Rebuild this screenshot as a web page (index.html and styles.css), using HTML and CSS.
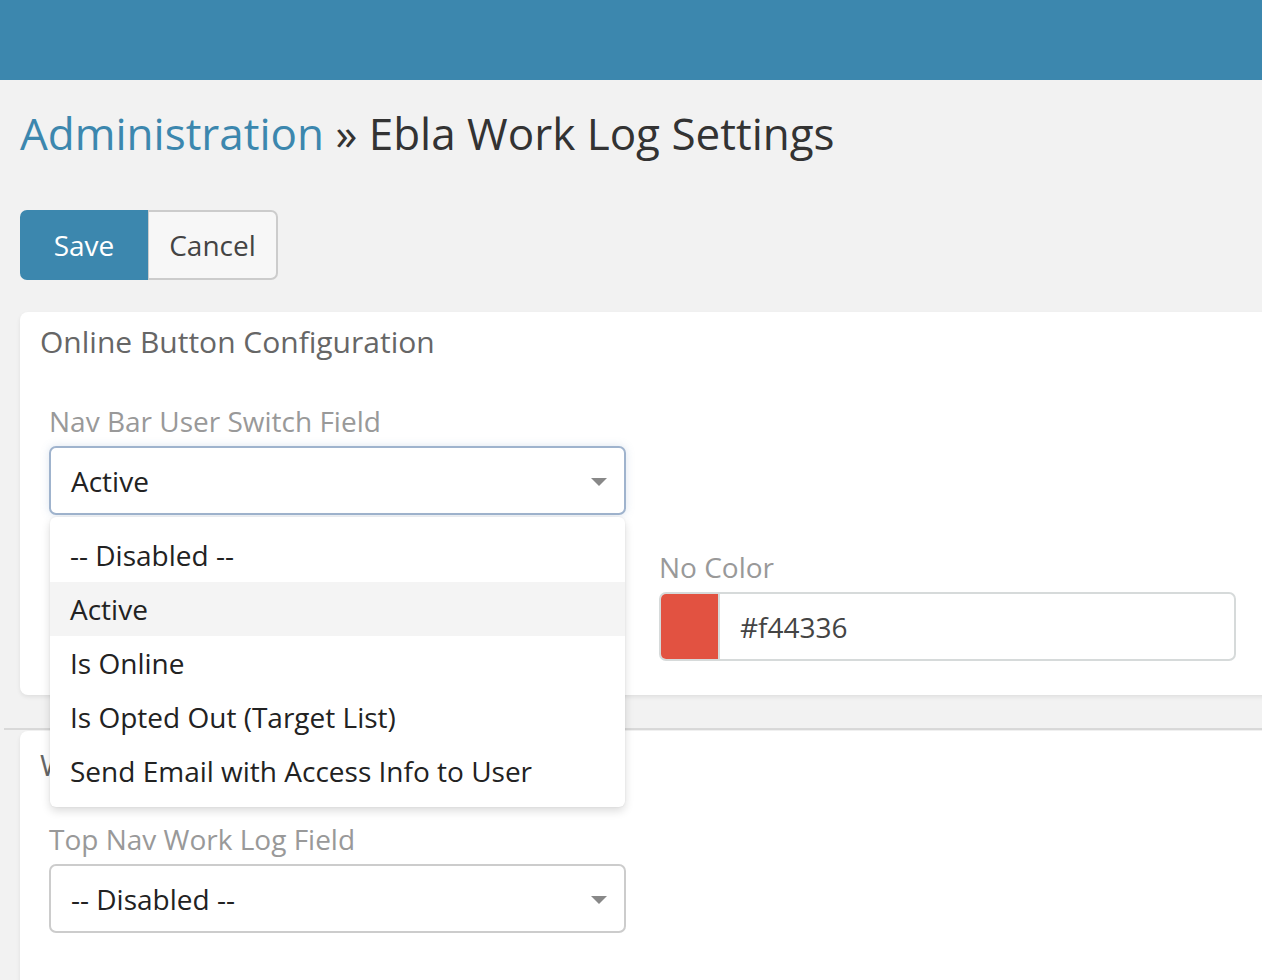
FILE: index.html
```html
<!DOCTYPE html>
<html lang="en">
<head>
<meta charset="utf-8">
<title>Ebla Work Log Settings</title>
<link rel="stylesheet" href="styles.css">
</head>
<body>
<header class="topbar"></header>
<main class="page">
  <h1 class="title"><a class="crumb" href="#">Administration</a> <span class="sep">»</span> Ebla Work Log Settings</h1>
  <div class="actions">
    <button class="btn btn-primary" type="button">Save</button><button class="btn btn-default" type="button">Cancel</button>
  </div>

  <section class="panel panel-first">
    <h2 class="panel-title">Online Button Configuration</h2>
    <div class="grid">
      <div class="field field-select">
        <label class="label">Nav Bar User Switch Field</label>
        <div class="select is-open"><span class="select-value">Active</span><span class="caret"></span></div>
        <ul class="dropdown">
          <li class="option">-- Disabled --</li>
          <li class="option is-hover">Active</li>
          <li class="option">Is Online</li>
          <li class="option">Is Opted Out (Target List)</li>
          <li class="option">Send Email with Access Info to User</li>
        </ul>
      </div>
      <div class="field"></div>
      <div class="field field-empty"></div>
      <div class="field">
        <label class="label">No Color</label>
        <div class="color-input"><span class="swatch"></span><span class="color-text">#f44336</span></div>
      </div>
    </div>
  </section>

  <div class="divider"></div>

  <section class="panel panel-second">
    <h2 class="panel-title">W</h2>
    <div class="grid">
      <div class="field">
        <label class="label">Top Nav Work Log Field</label>
        <div class="select"><span class="select-value">-- Disabled --</span><span class="caret"></span></div>
      </div>
    </div>
  </section>
</main>
</body>
</html>
```

FILE: styles.css
```css
* { box-sizing: border-box; }
html, body { margin: 0; padding: 0; }
body {
  background: #f2f2f2;
  font-family: "Open Sans", "Noto Sans", sans-serif;
  color: #333;
  width: 1262px;
  height: 980px;
  overflow: hidden;
}
.topbar {
  height: 80px;
  background: #3c87ae;
}
.page {
  padding-left: 20px;
}
.title {
  margin: 0;
  padding-top: 23px;
  height: 130px;
  font-size: 44px;
  line-height: 60px;
  font-weight: 400;
  color: #333;
}
.crumb { color: #3c87ae; text-decoration: none; }
.actions {
  display: flex;
  height: 70px;
}
.btn {
  font-family: inherit;
  font-size: 28px;
  height: 70px;
  margin: 0;
  cursor: pointer;
}
.btn-primary {
  width: 128px;
  background: #3c87ae;
  color: #fff;
  border: 0;
  border-radius: 7px 0 0 7px;
}
.btn-default {
  width: 130px;
  background: #f7f7f7;
  color: #444;
  border: 2px solid #ccc;
  border-left-width: 1px;
  border-radius: 0 7px 7px 0;
}
.panel {
  background: #fff;
  margin-right: -20px;
  border-radius: 8px 0 0 8px;
  box-shadow: 0 2px 4px rgba(0,0,0,0.08);
}
.panel-first {
  margin-top: 32px;
  padding: 10px 20px 34px 20px;
  height: 383px;
}
.panel-title {
  margin: 0;
  font-size: 30px;
  line-height: 40px;
  font-weight: 400;
  color: #666;
}
.grid {
  display: grid;
  grid-template-columns: 577px 577px;
  column-gap: 33px;
  row-gap: 34px;
  padding-left: 9px;
  margin-top: 41px;
}
.field { position: relative; }
.field-empty { height: 112px; }
.label {
  display: block;
  font-size: 28px;
  line-height: 36px;
  color: #999;
  height: 43px;
}
.select {
  position: relative;
  height: 69px;
  border: 2px solid #ccc;
  border-radius: 7px;
  background: #fff;
  display: flex;
  align-items: center;
  padding-left: 20px;
  font-size: 28px;
  color: #222;
}
.select.is-open {
  border-color: #9fb3cd;
  box-shadow: 0 0 8px rgba(120,150,190,0.25);
}
.caret {
  position: absolute;
  right: 17px;
  top: 30px;
  width: 0;
  height: 0;
  border-left: 8px solid transparent;
  border-right: 8px solid transparent;
  border-top: 8px solid #888;
}
.dropdown {
  position: absolute;
  z-index: 5;
  left: 1px;
  top: 114px;
  width: 575px;
  margin: 0;
  padding: 11px 0 9px;
  list-style: none;
  background: #fff;
  border-radius: 6px;
  box-shadow: 0 4px 10px rgba(0,0,0,0.14), 0 0 2px rgba(0,0,0,0.08);
}
.option {
  height: 54px;
  line-height: 54px;
  padding-left: 20px;
  font-size: 28px;
  color: #222;
}
.option.is-hover { background: #f4f4f4; }
.color-input {
  height: 69px;
  border: 2px solid #d6dada;
  border-radius: 7px;
  background: #fff;
  display: flex;
  align-items: center;
  overflow: hidden;
}
.swatch {
  width: 59px;
  height: 100%;
  background: #e25241;
  border-right: 2px solid #d6dada;
}
.color-text {
  padding-left: 20px;
  font-size: 28px;
  color: #444;
}
.divider {
  height: 2px;
  margin: 33px 0 1px -16px;
  border-top: 2px solid #d9d9d9;
}
.panel-second {
  padding: 14px 20px 0 20px;
  height: 260px;
  border-radius: 8px 0 0 0;
}
.panel-second .grid { margin-top: 36px; }
```
